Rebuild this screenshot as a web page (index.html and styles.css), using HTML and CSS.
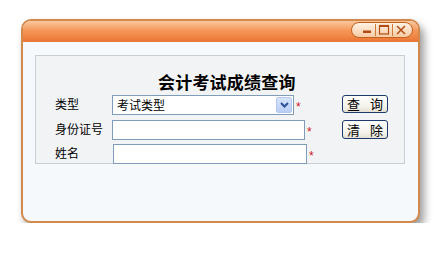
FILE: index.html
```html
<!DOCTYPE html>
<html lang="zh-CN">
<head>
<meta charset="utf-8">
<title>会计考试成绩查询</title>
<link rel="stylesheet" href="styles.css">
</head>
<body>
<div class="window">
  <div class="titlebar">
    <svg class="controls" width="62" height="16" viewBox="0 0 62 16">
      <defs>
        <linearGradient id="pill" x1="0" y1="0" x2="0" y2="1">
          <stop offset="0" stop-color="#fff3e6"/>
          <stop offset="1" stop-color="#f7c9a2"/>
        </linearGradient>
      </defs>
      <rect x="0.5" y="0.5" width="61" height="15" rx="7.5" fill="url(#pill)" stroke="#c2601f"/>
      <line x1="24.5" y1="2" x2="24.5" y2="14" stroke="#d07a3c"/>
      <line x1="41.5" y1="2" x2="41.5" y2="14" stroke="#d07a3c"/>
      <rect x="12" y="8.5" width="8" height="2.5" fill="#b04d12"/>
      <rect x="28.5" y="3.5" width="9" height="8.5" fill="none" stroke="#b04d12" stroke-width="1.2"/>
      <line x1="28.5" y1="4.2" x2="37.5" y2="4.2" stroke="#b04d12" stroke-width="1.6"/>
      <path d="M46 4 L54 12 M54 4 L46 12" stroke="#b04d12" stroke-width="1.5" fill="none"/>
    </svg>
  </div>
  <div class="content">
    <div class="panel">
      <div class="heading">会计考试成绩查询</div>
      <div class="row first">
        <span class="label">类型</span>
        <div class="field">
          <div class="select">
            <span class="select-text">考试类型</span>
            <span class="select-btn">
              <svg width="9" height="6" viewBox="0 0 9 6"><path d="M1 1 L4.5 4.5 L8 1" stroke="#2b4f9a" stroke-width="2" fill="none"/></svg>
            </span>
          </div>
          <span class="star">*</span>
        </div>
        <button class="btn">查 询</button>
      </div>
      <div class="row second">
        <span class="label">身份证号</span>
        <div class="field">
          <input class="input w193" type="text">
          <span class="star">*</span>
        </div>
        <button class="btn tall">清 除</button>
      </div>
      <div class="row third">
        <span class="label">姓名</span>
        <div class="field shift">
          <input class="input w194" type="text">
          <span class="star">*</span>
        </div>
      </div>
    </div>
  </div>
</div>
</body>
</html>
```
FILE: styles.css
```css
* { box-sizing: border-box; }
html, body { margin: 0; padding: 0; background: #ffffff; }
body {
  font-family: "Noto Sans CJK SC", "Liberation Sans", sans-serif;
  font-size: 12px;
  color: #000;
}
.window {
  margin: 19px 0 0 21px;
  width: 399px;
  height: 204px;
  border: 2px solid #d4894c;
  border-radius: 10px;
  background: #f6f9fc;
  box-shadow: 4px 6px 8px rgba(0, 0, 0, 0.4);
  overflow: hidden;
  display: flex;
  flex-direction: column;
}
.titlebar {
  height: 21px;
  flex: none;
  background: linear-gradient(#fbc79e 0%, #f59a5c 45%, #ec7734 100%);
  border-bottom: 1px solid #e27a3a;
  display: flex;
  justify-content: flex-end;
  align-items: flex-start;
  padding: 1px 5px 0 0;
}
.controls { display: block; }
.content {
  flex: 1;
  padding: 13px 0 0 12px;
}
.panel {
  width: 370px;
  height: 109px;
  border: 1px solid #c9ced6;
  background: #f2f3f5;
  padding: 15px 16px 0 19px;
}
.heading {
  font-size: 17px;
  font-weight: bold;
  line-height: 21px;
  height: 21px;
  padding-left: 103px;
  letter-spacing: 0.2px;
}
.row {
  display: grid;
  grid-template-columns: 57px 230px 46px;
  align-items: start;
  height: 21px;
}
.first { margin-top: 3px; }
.second { margin-top: 4px; }
.third { margin-top: 3px; }
.label {
  line-height: 18px;
  white-space: nowrap;
}
.field {
  display: flex;
  align-items: flex-start;
}
.shift { padding-left: 1px; }
.select {
  width: 182px;
  height: 20px;
  border: 1px solid #7f9db9;
  background: #fff;
  display: flex;
  align-items: center;
  justify-content: space-between;
  padding: 1px;
}
.select-text {
  padding-left: 3px;
  line-height: 16px;
}
.select-btn {
  width: 16px;
  height: 16px;
  border: 1px solid #b5c8f0;
  border-radius: 2px;
  background: linear-gradient(#d6e3fb, #b9cdf5);
  display: flex;
  align-items: center;
  justify-content: center;
}
.select-btn svg { display: block; }
.input {
  height: 20px;
  border: 1px solid #7f9db9;
  background: #fff;
  margin: 0;
  padding: 0;
  font: inherit;
}
.w193 { width: 193px; }
.w194 { width: 194px; }
.star {
  color: #d0161b;
  font-family: "Liberation Sans", sans-serif;
  font-size: 12px;
  line-height: 12px;
  padding: 6px 0 0 2px;
}
.btn {
  width: 46px;
  height: 18px;
  margin: 0;
  padding: 0 0 0 3px;
  border: 1px solid #1c3a6b;
  border-radius: 3px;
  background: linear-gradient(#ffffff, #f3f1ea 70%, #e3dfd2);
  font-family: "Noto Sans CJK SC", sans-serif;
  font-size: 13px;
  line-height: 16px;
  color: #000;
  letter-spacing: 3px;
  word-spacing: 1px;
}
.tall { height: 19px; }
```
